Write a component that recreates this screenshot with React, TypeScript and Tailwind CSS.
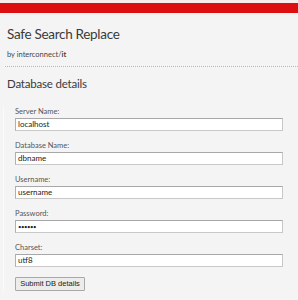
import React from "react"

const fields = [
	{ label: "Server Name:", value: "localhost" },
	{ label: "Database Name:", value: "dbname" },
	{ label: "Username:", value: "username" },
	{ label: "Password:", value: "••••••", password: true },
	{ label: "Charset:", value: "utf8" },
]

export default function App() {
	return (
		<div className="w-[298px] h-[300px] overflow-hidden bg-[#f4f4f4] text-[#333] font-['Lato',sans-serif]">
			<div className="h-[3px] bg-[#f9eeee]" />
			<div className="h-[10px] bg-[#dc1010]" />

			<div className="pl-[7px] pt-[12px]">
				<h1 className="text-[13.5px] leading-[18px] tracking-[-0.3px] text-[#3a3a3a]">Safe Search Replace</h1>
				<p className="mt-[7px] text-[7.5px] leading-[10px] text-[#444]">
					by interconnect/<b>it</b>
				</p>
			</div>

			<div className="mt-[6px] ml-[5px] border-t border-dotted border-[#b8b8b8]" />

			<div className="pl-[7px] pt-[9px]">
				<h2 className="text-[11.5px] leading-[15px] tracking-[-0.2px] text-[#3a3a3a]">Database details</h2>
			</div>

			<form className="ml-[3px] mt-[16px] pl-[11px] pr-[15px] border-l border-[#fbfbfb]">
				{fields.map((f) => (
					<div key={f.label} className="mb-[10px]">
						<div className="text-[7.5px] leading-[10px] text-[#555]">{f.label}</div>
						<div className="mt-[1px] h-[13px] bg-white border border-[#c8c8c8] border-t-[#a8a8a8] border-l-[#b0b0b0] px-[2px] text-[8px] leading-[11px] text-[#222]">
							{f.password ? <span className="text-[6px] tracking-[-0.5px]">{f.value}</span> : f.value}
						</div>
					</div>
				))}
				<button
					type="button"
					className="block mt-[4px] h-[14px] w-[70px] whitespace-nowrap bg-[#ececec] border border-[#a9a9a9] rounded-[1px] text-[7.5px] leading-[12px] text-[#222] font-['Liberation_Sans',sans-serif]"
				>
					Submit DB details
				</button>
			</form>
		</div>
	)
}
